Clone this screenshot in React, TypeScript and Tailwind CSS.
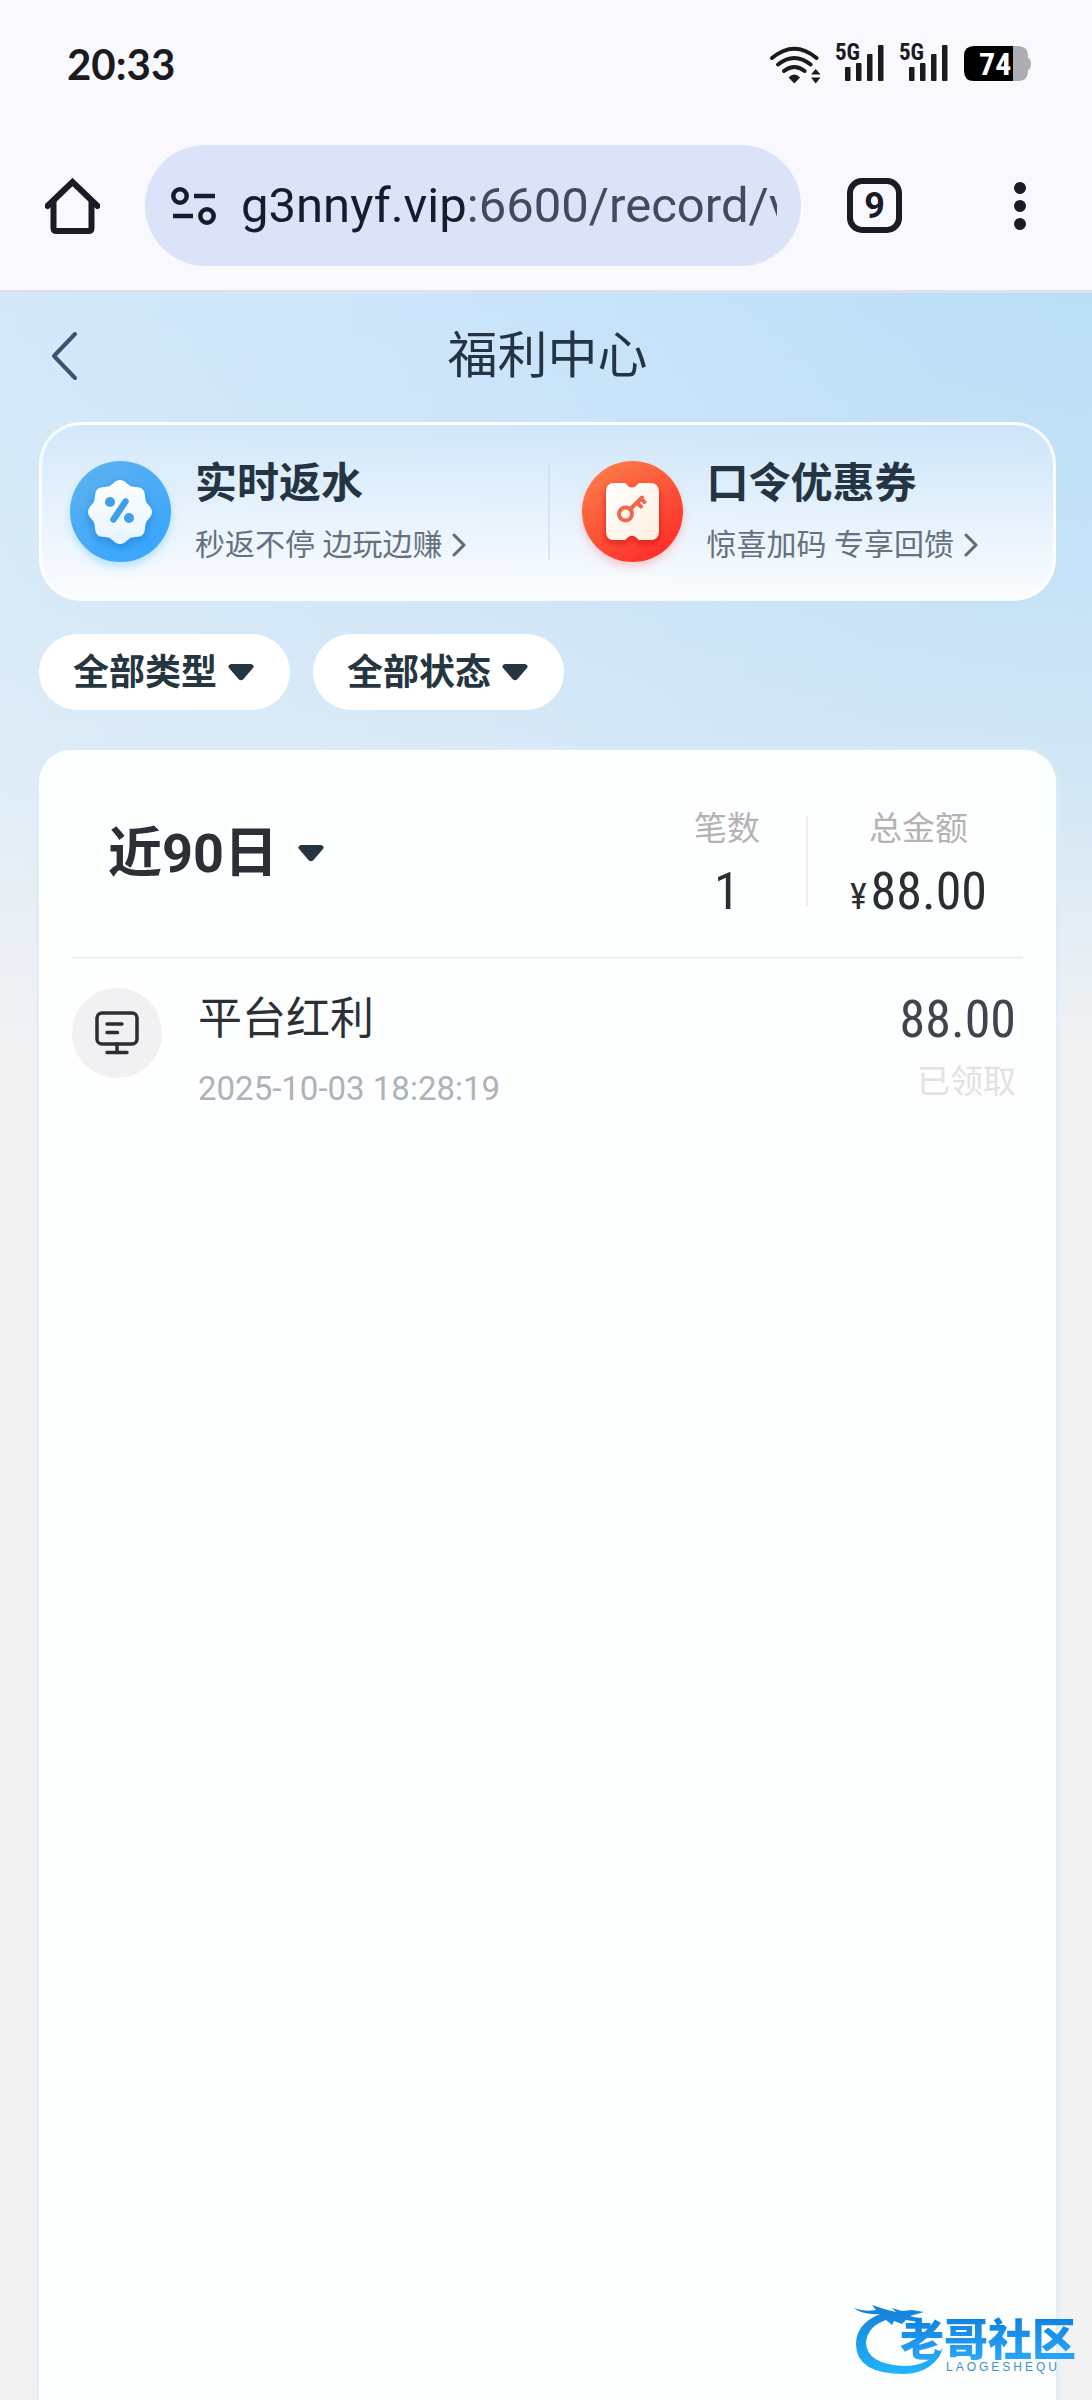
import type { ReactNode } from "react";

const SCALLOP = (() => {
  const points: string[] = [];
  for (let i = 0; i < 144; i++) {
    const a = (i / 144) * Math.PI * 2;
    const r = 30 + 2 * Math.cos(8 * a);
    points.push(`${(50 + r * Math.sin(a)).toFixed(2)},${(51 - r * Math.cos(a)).toFixed(2)}`);
  }
  return `M${points.join("L")}Z`;
})();

function WifiIcon() {
  return (
    <svg width="56" height="44" viewBox="0 0 56 44" fill="none" stroke="#1b1b1f" strokeWidth="4" strokeLinecap="round" aria-hidden="true">
      <path d="M6 16Q28.3-2.5 50.5 16" />
      <path d="M12 22.5Q28.3 9.5 44.6 22.5" />
      <path d="M18 29Q28.3 21 38.6 29" />
      <path d="M22.5 35.5Q28.3 29.5 34.1 35.5L28.3 41.5Z" fill="#1b1b1f" stroke="none" />
      <path d="M49.7 27L54.5 32.5H45ZM49.7 41.5L54.5 35.5H45Z" fill="#1b1b1f" stroke="none" />
    </svg>
  );
}

function SignalIcon() {
  return (
    <svg className="overflow-visible" width="50" height="44" viewBox="0 0 50 44" fill="#1b1b1f" aria-hidden="true">
      <text x="-1" y="18" className='font-["Roboto_Condensed"] text-[23px] font-bold'>5G</text>
      <rect x="9" y="25" width="5.5" height="14" rx="1" />
      <rect x="20" y="21" width="5.5" height="18" rx="1" />
      <rect x="31" y="12" width="5.5" height="27" rx="1" />
      <rect x="42" y="3" width="5.5" height="36" rx="1" />
    </svg>
  );
}

function BatteryIcon() {
  return (
    <svg width="68" height="36" viewBox="0 0 68 36" aria-hidden="true">
      <path d="M9 0H54Q64 0 64 10V12Q67 13 67 18T64 24V25Q64 35 54 35H9Z" fill="#aeacb1" />
      <path d="M10 0H49V35H10Q0 35 0 25V10Q0 0 10 0Z" fill="#000" />
      <text x="15" y="29" fill="#fff" className='font-["Roboto_Condensed"] text-[32px] font-bold'>74</text>
    </svg>
  );
}

function HomeIcon() {
  return (
    <svg width="55" height="56" viewBox="0 0 55 56" fill="none" stroke="#1b1b26" strokeWidth="6" aria-hidden="true">
      <path d="M2.5 28L27.5 4L52.5 28" strokeLinecap="round" />
      <path d="M8.5 23V50Q8.5 53 11.5 53H43.5Q46.5 53 46.5 50V23" />
    </svg>
  );
}

function SiteInfoIcon() {
  return (
    <svg className="shrink-0" width="46" height="38" viewBox="0 0 46 38" fill="none" stroke="#171c2c" strokeWidth="4.5" aria-hidden="true">
      <circle cx="9" cy="9" r="6.7" />
      <path d="M23 9H44M2 29H22" />
      <circle cx="36" cy="29" r="6.7" />
    </svg>
  );
}

function Caret() {
  return (
    <svg className="pointer-events-none shrink-0" width="26" height="17" viewBox="0 0 26 17" fill="#263640" aria-hidden="true">
      <path d="M3 0H23Q27 1 25 4L15.5 15Q13 17.5 10.5 15L1 4Q-1 1 3 0Z" />
    </svg>
  );
}

function ChevronRight() {
  return (
    <svg className="shrink-0" width="14" height="24" viewBox="0 0 14 24" fill="none" stroke="#5f6a76" strokeWidth="3" strokeLinecap="round" strokeLinejoin="round" aria-hidden="true">
      <path d="M2 2L12 12L2 22" />
    </svg>
  );
}

function RebateIcon() {
  return (
    <svg className="shrink-0 overflow-visible" width="101" height="101" viewBox="0 0 101 101" aria-hidden="true">
      <defs>
        <linearGradient id="rebate" x1="0" y1="0" x2="0.6" y2="1">
          <stop offset="0" stopColor="#5fb2ee" />
          <stop offset="1" stopColor="#3aa6fc" />
        </linearGradient>
        <linearGradient id="rebateBadge" x1="0" y1="0" x2="0" y2="1">
          <stop offset="0" stopColor="#ffffff" />
          <stop offset="1" stopColor="#e6f4fe" />
        </linearGradient>
        <filter id="rebateGlow" x="-30%" y="-30%" width="160%" height="160%">
          <feDropShadow dx="0" dy="5" stdDeviation="4" floodColor="#8fd3ff" floodOpacity="0.6" />
        </filter>
        <filter id="rebateShade" x="-30%" y="-30%" width="160%" height="160%">
          <feDropShadow dx="0" dy="4" stdDeviation="4" floodColor="#1673cc" floodOpacity="0.55" />
        </filter>
      </defs>
      <circle cx="50.5" cy="50.5" r="50.5" fill="url(#rebate)" filter="url(#rebateGlow)" />
      <path d={SCALLOP} fill="url(#rebateBadge)" filter="url(#rebateShade)" />
      <circle cx="40" cy="41" r="5" fill="#3f9fe9" />
      <circle cx="59" cy="57" r="5" fill="#3f9fe9" />
      <path d="M55.5 40.5L43.5 58.5" stroke="#3f9fe9" strokeWidth="6.5" strokeLinecap="round" />
    </svg>
  );
}

function CouponIcon() {
  return (
    <svg className="shrink-0 overflow-visible" width="101" height="101" viewBox="0 0 101 101" aria-hidden="true">
      <defs>
        <linearGradient id="coupon" x1="0.15" y1="0" x2="0.8" y2="1">
          <stop offset="0" stopColor="#fd7f49" />
          <stop offset="1" stopColor="#fe2a28" />
        </linearGradient>
        <linearGradient id="couponTicket" x1="0" y1="0" x2="1" y2="1">
          <stop offset="0" stopColor="#ffffff" />
          <stop offset="1" stopColor="#ffefdf" />
        </linearGradient>
        <filter id="couponGlow" x="-30%" y="-30%" width="160%" height="160%">
          <feDropShadow dx="0" dy="5" stdDeviation="4" floodColor="#ffa0a0" floodOpacity="0.5" />
        </filter>
        <filter id="couponShade" x="-30%" y="-30%" width="160%" height="160%">
          <feDropShadow dx="0" dy="3" stdDeviation="3" floodColor="#b81010" floodOpacity="0.6" />
        </filter>
      </defs>
      <circle cx="50.5" cy="50.5" r="50.5" fill="url(#coupon)" filter="url(#couponGlow)" />
      <path
        d="M32 22H42Q44 22 45 24Q50 29 55 24Q56 22 58 22H68Q77 22 77 31V70Q77 79 68 79H58Q56 79 55 77Q50 72 45 77Q44 79 42 79H32Q24 79 24 70V31Q24 22 32 22Z"
        fill="url(#couponTicket)"
        filter="url(#couponShade)"
      />
      <g fill="none" stroke="#f2664a" strokeLinecap="round" strokeLinejoin="round">
        <circle cx="43.5" cy="53" r="6.5" strokeWidth="4" />
        <path d="M48.5 48L60 36.5M55 42L59 45.5M59 38L62.5 41" strokeWidth="4" />
      </g>
    </svg>
  );
}

function MonitorIcon() {
  return (
    <svg width="44" height="44" viewBox="0 0 44 44" fill="none" stroke="#2b2e35" strokeWidth="3.5" strokeLinecap="round" aria-hidden="true">
      <rect x="2" y="2" width="40" height="31" rx="5" />
      <path d="M12 13H27M12 21.5H22.5M22 33V41M12 41.5H32" />
    </svg>
  );
}

function PromoCard({ icon, title, text }: { icon: ReactNode; title: string; text: string }) {
  return (
    <a href="#" className="flex flex-1 items-center gap-6">
      {icon}
      <span className="flex flex-col pt-1.5">
        <span className="text-[42px] leading-[60px] font-bold text-[#253442]">{title}</span>
        <span className="flex items-center gap-2.5 text-[30px] leading-[62px] text-[#66717d]">
          {text}
          <ChevronRight />
        </span>
      </span>
    </a>
  );
}

function FilterPill({ name, value }: { name: string; value: string }) {
  return (
    <label className="flex h-[76px] items-center gap-2.5 rounded-full bg-white pr-9 pl-[34px]">
      <select aria-label={name} className="appearance-none bg-transparent pt-0.5 text-[36px] leading-[48px] font-bold text-[#263640] outline-none">
        <option>{value}</option>
      </select>
      <Caret />
    </label>
  );
}

function Watermark() {
  return (
    <div className="absolute right-4 bottom-6 h-[72px] w-[224px]">
      <svg className="absolute inset-0" width="224" height="72" viewBox="0 0 224 72" aria-hidden="true">
        <defs>
          <linearGradient id="dragon" x1="0" y1="0" x2="0" y2="1">
            <stop offset="0" stopColor="#147fd8" />
            <stop offset="1" stopColor="#22b4fb" />
          </linearGradient>
        </defs>
        <path
          d="M28 10Q4 20 4 40Q4 70 52 70Q82 69 91 44Q76 62 52 62Q14 60 14 38Q16 22 34 16L40 21L42 17L50 20L54 16L66 18L70 15L58 12L72 8L60 6L50 7L40 4L44 8L32 5L20 1L24 6Q12 8 2 4Q10 11 28 10Z"
          fill="url(#dragon)"
        />
      </svg>
      <div className="absolute top-2.5 right-0 flex flex-col items-end">
        <span className='bg-gradient-to-b from-[#0c7fe0] to-[#2aa6f6] bg-clip-text font-["Noto_Sans_CJK_SC",sans-serif] text-[44px] leading-[46px] font-black text-transparent'>
          老哥社区
        </span>
        <span className='pr-4 font-["Liberation_Sans"] text-[12px] leading-[14px] tracking-[3px] text-[#3f8fcb]'>LAOGESHEQU</span>
      </div>
    </div>
  );
}

export default function App() {
  return (
    <div className='relative flex min-h-screen flex-col overflow-hidden bg-[#f2f2f3] font-["Roboto","Noto_Sans_CJK_SC",sans-serif]'>
      <header className="border-b-[3px] border-[#dfe1ea] bg-[#f9f8ff]">
        <div className="flex h-32 items-center justify-between pr-[60px] pl-[67px]">
          <time className='font-["Lato"] text-[42px] font-bold text-[#1b1b1f]'>20:33</time>
          <div className="flex items-center gap-3.5">
            <WifiIcon />
            <SignalIcon />
            <SignalIcon />
            <BatteryIcon />
          </div>
        </div>
        <div className="flex items-center pt-[17px] pr-[58px] pb-6 pl-[45px]">
          <button aria-label="Home"><HomeIcon /></button>
          <button aria-label="Address bar" className="mr-[46px] ml-[45px] flex h-[121px] min-w-0 flex-1 items-center gap-6 rounded-full bg-[#dae3f8] pr-6 pl-[26px]">
            <SiteInfoIcon />
            <span className="min-w-0 flex-1 overflow-hidden text-left text-[49px] leading-[64px] whitespace-nowrap text-[#444a5c]">
              <span className="text-[#171c2c]">g3nnyf.vip</span>:6600/record/v
            </span>
          </button>
          <button aria-label="Tabs" className="flex size-[55px] items-center justify-center rounded-[15px] border-6 border-[#1b1b26] text-[36px] leading-none font-bold text-[#1b1b26]">
            9
          </button>
          <button aria-label="Menu" className="ml-[104px] flex w-7 flex-col items-center gap-1.5">
            <span className="size-3 rounded-full bg-[#1b1b26]" />
            <span className="size-3 rounded-full bg-[#1b1b26]" />
            <span className="size-3 rounded-full bg-[#1b1b26]" />
          </button>
        </div>
      </header>

      <main className="flex flex-1 flex-col bg-[linear-gradient(180deg,rgba(242,242,243,0)_0,rgba(242,242,243,0.2)_300px,rgba(242,242,243,0.4)_480px,rgba(242,242,243,1)_760px),linear-gradient(100deg,#d3e9f9_0,#c9e4fa_35%,#bddff7_65%,#b9ddf7_100%)] pr-9 pl-[39px]">
        <nav className="grid h-[129px] grid-cols-[1fr_auto_1fr] items-center pb-1">
          <button aria-label="Back" className="justify-self-start pl-3">
            <svg width="27" height="50" viewBox="0 0 27 50" fill="none" stroke="#3f5070" strokeWidth="4" strokeLinecap="round" strokeLinejoin="round" aria-hidden="true">
              <path d="M24 3L3 25L24 47" />
            </svg>
          </button>
          <h1 className="text-[50px] leading-[60px] text-[#253442]">福利中心</h1>
        </nav>

        <section className="flex h-[179px] items-center rounded-[42px] border-[3px] border-white/80 bg-gradient-to-b from-[#d3e8fa]/60 to-[#fafcff] pl-7">
          <div className="flex flex-1 pr-1.5">
            <PromoCard icon={<RebateIcon />} title="实时返水" text="秒返不停 边玩边赚" />
          </div>
          <div className="h-24 w-0.5 bg-[#cfdbe8]/60" />
          <div className="flex flex-1 pl-8">
            <PromoCard icon={<CouponIcon />} title="口令优惠券" text="惊喜加码 专享回馈" />
          </div>
        </section>

        <div className="mt-[33px] flex gap-[23px]">
          <FilterPill name="类型" value="全部类型" />
          <FilterPill name="状态" value="全部状态" />
        </div>

        <section className="mt-10 flex-1 rounded-t-[32px] bg-[#fdfefe] px-[33px] shadow-[0_0_4px_2px_#dcebf9]">
          <div className="flex h-[209px] items-center border-b-[3px] border-[#f2f3f4] px-9">
            <label className="flex items-center gap-5">
              <select aria-label="日期" className="appearance-none bg-transparent pt-0.5 text-[54px] leading-[72px] font-bold text-[#2b2f36] outline-none">
                <option>近90日</option>
              </select>
              <Caret />
            </label>
            <dl className="ml-auto flex items-center pt-4 text-center">
              <div>
                <dt className="text-[33px] leading-[62px] text-[#b3b3b5]">笔数</dt>
                <dd className='font-["Roboto_Condensed"] text-[52px] leading-[64px] text-[#2b2d31]'>1</dd>
              </div>
              <div className="mr-[42px] ml-[46px] h-[90px] w-0.5 bg-[#ececef]" />
              <div>
                <dt className="text-[33px] leading-[62px] text-[#b3b3b5]">总金额</dt>
                <dd className='font-["Roboto_Condensed"] text-[52px] leading-[64px] text-[#2b2d31]'>
                  <span className="mr-1 text-[36px] leading-none">¥</span>88.00
                </dd>
              </div>
            </dl>
          </div>
          <ul>
            <li className="flex items-start gap-9 pt-[29px] pr-[7px]">
              <span className="flex size-[90px] items-center justify-center rounded-full bg-[#f1f1f4]">
                <MonitorIcon />
              </span>
              <div className="flex flex-1 flex-col">
                <span className="text-[44px] leading-[62px] text-[#2b2f36]">平台红利</span>
                <time className="mt-1 text-[33px] leading-[70px] text-[#afb3b9]">2025-10-03 18:28:19</time>
              </div>
              <div className="flex flex-col text-right">
                <span className='font-["Roboto_Condensed"] text-[52px] leading-[64px] text-[#40444f]'>88.00</span>
                <span className="text-[33px] leading-[60px] text-[#e2e2e5]">已领取</span>
              </div>
            </li>
          </ul>
        </section>
      </main>
      <Watermark />
    </div>
  );
}
